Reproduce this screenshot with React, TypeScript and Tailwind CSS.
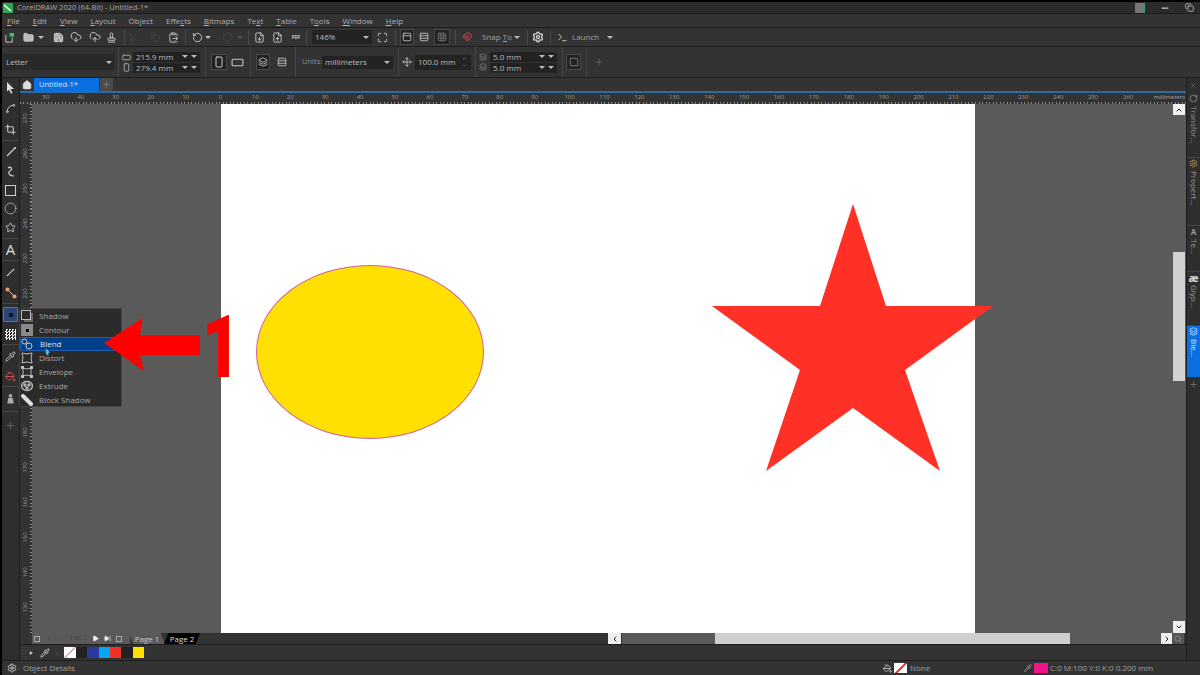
import React from 'react';
import {
  ChevronDown, ChevronUp, ChevronRight, ChevronLeft, CloudDownload, CloudUpload, Copy, FileDown, FileUp, Folder,
  Home, Maximize, Move, Plus, RotateCcw, RotateCw, Save, Scissors, Search, Settings, Square, Circle, Star, X,
  Minus, Stamp, ClipboardPaste, Pipette, PaintBucket, Spline, Crop, Slash, Grid3x3, Magnet, Play, SkipForward, RectangleHorizontal, RectangleVertical, Layers, Rows3, SquareDashed, PanelTop, Terminal
} from 'lucide-react';

const menus: [string, string, string][] = [
  ['', 'F', 'ile'], ['', 'E', 'dit'], ['', 'V', 'iew'], ['', 'L', 'ayout'], ['Ob', 'j', 'ect'], ['Effe', 'c', 'ts'],
  ['', 'B', 'itmaps'], ['Te', 'x', 't'], ['', 'T', 'able'], ['T', 'o', 'ols'], ['', 'W', 'indow'], ['', 'H', 'elp'],
];

const hLabels = ['50', '40', '30', '20', '10', '0', '10', '20', '30', '40', '50', '60', '70', '80', '90', '100', '110', '120', '130', '140', '150', '160', '170', '180', '190', '200', '210', '220', '230', '240', '250', '260'];
const vLabels = ['270', '260', '250', '240', '230', '220', '210', '200', '190', '180', '170', '160', '150', '140', '130'];

const flyout = ['Shadow', 'Contour', 'Blend', 'Distort', 'Envelope', 'Extrude', 'Block Shadow'];

const Sep = ({ className = '' }: { className?: string }) => <div className={`w-px h-[15px] bg-[#4a4a4a] mx-[3px] shrink-0 ${className}`} />;
const Caret = ({ dim = false, className = '' }: { dim?: boolean; className?: string }) => (
  <div className={`w-0 h-0 border-x-[3px] border-x-transparent border-t-[3px] shrink-0 ${dim ? 'border-t-[#555]' : 'border-t-[#bbb]'} ${className}`} />
);

const Tool = ({ children, className = 'w-[16px]', on = false }: { children: React.ReactNode; className?: string; on?: boolean }) => (
  <div className={`${className} h-[16px] flex items-center justify-center shrink-0 text-[#c8c8c8] ${on ? 'bg-[#222] border border-[#4a4a4a]' : ''}`}>{children}</div>
);

const Spin = ({ value }: { value: string }) => (
  <div className="w-[67px] h-[10px] bg-[#222] flex items-center justify-between pl-[3px] text-[8px] text-[#bdbdbd]">
    {value}
    <div className="flex gap-[3px] pr-[3px]"><Caret /><Caret /></div>
  </div>
);

const PropSep = () => <div className="w-px self-stretch bg-[#474747] shrink-0" />;

const toolbox = [
  { h: 'h-[20px]', sep: false, icon: <svg viewBox="0 0 12 12" className="w-[12px] h-[12px]"><path d="M2 0l7 7H5.5l2 4-1.5.8-2-4L2 9.5z" fill="#ddd" /></svg> },
  { h: 'h-[21px]', sep: false, icon: <Spline size={11} /> },
  { h: 'h-[22px]', sep: true, icon: <Crop size={11} strokeWidth={2.5} /> },
  { h: 'h-[22px]', sep: false, icon: <svg viewBox="0 0 12 12" className="w-[12px] h-[12px]"><path d="M2 10l8-8" stroke="#ccc" strokeWidth="1.2" /><circle cx="10" cy="2" r="1" fill="#ddd" /></svg> },
  { h: 'h-[18px]', sep: false, icon: <svg viewBox="0 0 12 12" className="w-[12px] h-[12px]" fill="none" stroke="#ccc" strokeWidth="1.2"><path d="M3 2c3-2 5 1 2 3-3 2 0 5 4 5" /></svg> },
  { h: 'h-[18px]', sep: false, icon: <div className="w-[11px] h-[11px] border border-[#ccc]" /> },
  { h: 'h-[18px]', sep: false, icon: <Circle size={13} strokeWidth={1.3} /> },
  { h: 'h-[22px]', sep: true, icon: <Star size={11} /> },
  { h: 'h-[22px]', sep: true, icon: <span className="text-[15px] leading-none text-[#ddd]">A</span> },
  { h: 'h-[22px]', sep: false, icon: <svg viewBox="0 0 12 12" className="w-[11px] h-[11px]"><path d="M2 10l8-8" stroke="#ccc" strokeWidth="1.2" /></svg> },
  { h: 'h-[21px]', sep: true, icon: <svg viewBox="0 0 12 12" className="w-[12px] h-[12px]"><path d="M2 2l8 8" stroke="#ccc" /><circle cx="2.5" cy="2.5" r="2" fill="#e8a070" /><circle cx="9.5" cy="9.5" r="2" fill="#e8a070" /></svg> },
  { h: 'h-[21px]', sep: false, icon: <div className="w-[15px] h-[15px] border border-[#3d78c8] bg-[#2b4677] rounded-[1px] flex items-center justify-center"><div className="w-[4px] h-[4px] bg-[#111]" /></div> },
  { h: 'h-[20px]', sep: true, icon: <div className="w-[11px] h-[11px] bg-[repeating-conic-gradient(#eee_0_25%,#222_0_50%)] bg-[length:3px_3px]" /> },
  { h: 'h-[22px]', sep: false, icon: <Pipette size={11} /> },
  { h: 'h-[20px]', sep: true, icon: <PaintBucket size={11} className="text-[#e05050]" /> },
  { h: 'h-[25px]', sep: true, icon: <svg viewBox="0 0 12 12" className="w-[11px] h-[12px]" fill="#aaa"><circle cx="6" cy="2.5" r="2" /><path d="M3.5 5h5l1 6h-7z" /></svg> },
  { h: 'h-[26px]', sep: false, icon: <Plus size={11} className="text-[#666]" /> },
];

const dockTabs = [
  { label: 'Transfor...', h: 'h-[65px]', icon: <RotateCw size={9} /> },
  { label: 'Propert...', h: 'h-[68px]', icon: <Settings size={9} className="text-[#d0a060]" /> },
  { label: 'Te...', h: 'h-[46px]', icon: <span className="text-[8px] font-bold">A</span> },
  { label: 'Glyp...', h: 'h-[54px]', icon: <span className="text-[11px] font-bold leading-none text-[#ddd]">æ</span> },
];

export default function App() {
  return (
    <div className="relative w-[1200px] h-[675px] overflow-hidden bg-black pl-[2px] pt-[2px] font-['Open_Sans','Liberation_Sans',sans-serif] text-[8px] text-[#bdbdbd] flex flex-col">
      {/* title bar */}
      <div className="h-[12px] bg-[#2b2b2b] flex items-center shrink-0 border-b border-[#1d1d1d]">
        <svg viewBox="0 0 10 10" className="w-[10px] h-[10px] ml-[1px]"><rect width="10" height="10" fill="#2fa84f" /><path d="M1 2l7 6" stroke="#fff" strokeWidth="1.6" /></svg>
        <span className="ml-[4px] text-[#a8a8a8] text-[7.5px]">CorelDRAW 2020 (64-Bit) - Untitled-1*</span>
        <div className="ml-auto flex items-center gap-[15px] pr-[6px] text-[#ccc]">
          <div className="w-[10px] h-[10px] bg-[#777] border-t border-r border-[#3ca060]" />
          <Minus size={10} strokeWidth={3} />
          <Copy size={9} />
        </div>
      </div>
      {/* menu */}
      <div className="h-[14px] bg-[#333] flex items-center gap-[13px] pl-[5px] shrink-0 border-b border-[#1d1d1d] text-[#b0b0b0] text-[8px]">
        {menus.map(([a, u, b]) => (
          <span key={a + u + b}>{a}<span className="underline">{u}</span>{b}</span>
        ))}
      </div>
      {/* standard toolbar */}
      <div className="h-[19px] bg-[#333] flex items-center shrink-0 border-b border-[#1d1d1d]">
        <Tool className="w-[14px]"><svg viewBox="0 0 12 12" className="w-[11px] h-[11px]" fill="none"><path d="M2 3v8h7V6" stroke="#ccc" /><rect x="6" y="1" width="5" height="4" fill="#3fbf5f" /></svg></Tool>
        <Tool className="w-[16px] ml-[4px]"><Folder size={11} fill="#bbb" /></Tool>
        <Caret className="ml-[2px]" />
        <Tool className="w-[16px] ml-[6px]"><Save size={11} fill="#999" className="text-[#ddd]" /></Tool>
        <Tool className="w-[16px] ml-[2px]"><CloudDownload size={12} /></Tool>
        <Tool className="w-[16px] ml-[3px]"><CloudUpload size={12} /></Tool>
        <Tool><Stamp size={11} /></Tool>
        <Sep className="ml-[5px]" />
        <Tool className="w-[10px]"><Scissors size={9} className="text-[#444]" /></Tool>
        <Tool className="w-[16px] ml-[9px]"><Copy size={10} className="text-[#444]" /></Tool>
        <Tool className="w-[16px] ml-[2px]"><ClipboardPaste size={11} /></Tool>
        <Sep className="ml-[4px]" />
        <Tool><RotateCcw size={11} /></Tool>
        <Caret />
        <Tool className="w-[16px] ml-[8px]"><RotateCw size={11} className="text-[#444]" /></Tool>
        <Caret dim className="ml-[2px]" />
        <Sep className="ml-[5px]" />
        <Tool className="w-[16px] -ml-[1px]"><FileDown size={11} /></Tool>
        <Tool className="w-[16px] ml-[2px]"><FileUp size={11} /></Tool>
        <Tool className="w-[16px] ml-[3px]"><span className="text-[4.5px] leading-none font-bold">PDF</span></Tool>
        <Sep className="ml-[2px]" />
        <div className="w-[60px] ml-[2px] h-[14px] bg-[#232323] flex items-center justify-between px-[3px] text-[8px] shrink-0">146%<Caret /></div>
        <Tool className="w-[16px] ml-[2px]"><Maximize size={11} /></Tool>
        <Sep className="ml-[5px]" />
        <Tool className="w-[14px] ml-[1px]" on><PanelTop size={10} /></Tool>
        <Tool className="w-[16px] ml-[2px]"><Rows3 size={10} /></Tool>
        <Tool className="w-[16px] ml-[2px]" on><Grid3x3 size={10} className="text-[#777]" /></Tool>
        <Sep className="ml-[5px]" />
        <Tool className="w-[14px] ml-[1px]"><Magnet size={10} className="text-[#e05050]" /></Tool>
        <span className="ml-[8px] w-[30px] text-[8px] text-[#a0a0a0] shrink-0">Snap <span className="underline">T</span>o</span>
        <Caret className="ml-[2px]" />
        <Sep className="ml-[7px]" />
        <Tool className="w-[14px]"><Settings size={12} strokeWidth={2.5} className="text-[#ddd]" /></Tool>
        <Sep className="ml-[5px]" />
        <Tool className="w-[14px] ml-[1px]"><Terminal size={11} /></Tool>
        <span className="ml-[3px] w-[30px] text-[8px] text-[#a0a0a0] shrink-0">Launch</span>
        <Caret className="ml-[5px]" />
      </div>
      {/* property bar */}
      <div className="h-[31px] bg-[#333] flex items-center shrink-0 border-b border-[#1d1d1d]">
        <div className="w-[112px] h-[16px] ml-[1px] bg-[#292929] flex items-center justify-between px-[3px] text-[8px] shrink-0">Letter<Caret /></div>
        <div className="w-[3px]" />
        <PropSep />
        <div className="w-[13px] ml-[1px] flex flex-col items-center gap-[1px] shrink-0"><RectangleHorizontal size={9} /><RectangleVertical size={9} /></div>
        <div className="flex flex-col gap-[1px] shrink-0"><Spin value="215.9 mm" /><Spin value="279.4 mm" /></div>
        <div className="w-[5px]" />
        <PropSep />
        <Tool className="w-[16px] ml-[5px]" on><RectangleVertical size={12} /></Tool>
        <Tool className="w-[20px]"><RectangleHorizontal size={13} /></Tool>
        <div className="w-[3px]" />
        <PropSep />
        <Tool className="w-[14px] ml-[5px]" on><Layers size={10} /></Tool>
        <Tool className="w-[24px]"><Rows3 size={10} /></Tool>
        <div className="w-[1px]" />
        <PropSep />
        <span className="ml-[6px] w-[20px] text-[#8c8c8c] text-[7.5px] shrink-0">Units:</span>
        <div className="w-[71px] h-[13px] bg-[#232323] flex items-center justify-between px-[3px] text-[8px] shrink-0">millimeters<Caret /></div>
        <div className="w-[5px]" />
        <PropSep />
        <Tool className="w-[15px]"><Move size={10} /></Tool>
        <div className="w-[56px] ml-[1px] h-[15px] bg-[#232323] flex items-center justify-between pl-[3px] pr-[4px] text-[8px] shrink-0">100.0 mm<div className="flex flex-col gap-[2px]"><ChevronUp size={5} /><ChevronDown size={5} /></div></div>
        <div className="w-[4px]" />
        <PropSep />
        <div className="w-[14px] flex flex-col items-center gap-[2px] text-[#888] shrink-0"><Layers size={8} /><Layers size={8} /></div>
        <div className="flex flex-col gap-[1px] shrink-0"><Spin value="5.0 mm" /><Spin value="5.0 mm" /></div>
        <div className="w-[5px]" />
        <PropSep />
        <Tool className="w-[15px] ml-[3px]" on><SquareDashed size={10} /></Tool>
        <div className="w-[5px]" />
        <PropSep />
        <Plus size={10} className="ml-[7px] text-[#666]" />
      </div>

      {/* work area */}
      <div className="flex-1 flex min-h-0">
        {/* toolbox */}
        <div className="w-[18px] shrink-0 bg-[#2e2e2e] flex flex-col text-[#c8c8c8] border-r border-[#1d1d1d]">
          {toolbox.map((t, i) => (
            <div key={i} className={`${t.h} flex items-center justify-center shrink-0 ${t.sep ? 'border-b border-[#454545]' : ''}`}>{t.icon}</div>
          ))}
        </div>
        <div className="flex-1 flex flex-col min-w-0">
          {/* doc tabs */}
          <div className="h-[15px] shrink-0 bg-[#333] border-b-2 border-[#2d6aa8] flex items-stretch">
            <div className="w-[14px] flex items-center justify-center"><Home size={10} fill="#ddd" className="text-[#ddd]" /></div>
            <div className="w-[65px] bg-[#0a6fe0] text-[#d8e8ff] flex items-center pl-[5px] text-[7.5px]">Untitled-1*</div>
            <div className="w-[13px] bg-[#4a4a4a] ml-[1px] flex items-center justify-center"><Plus size={9} strokeWidth={3} className="text-[#777]" /></div>
          </div>
          <div className="flex-1 flex min-h-0">
            <div className="flex-1 flex flex-col min-w-0">
              {/* horizontal ruler */}
              <div className="h-[11px] shrink-0 bg-[#333] flex flex-col justify-between relative">
                <div className="flex pl-[8.5px] text-[6px] leading-[8px] text-[#9a9a9a] whitespace-nowrap">
                  {hLabels.map((l, i) => <span key={i} className="w-[34.92px] text-center shrink-0">{l}</span>)}
                </div>
                <div className="h-[2px] bg-[repeating-linear-gradient(90deg,#8a8a8a_0_1px,transparent_1px_3.5px)]" />
                <span className="absolute right-[1px] top-0 text-[6px] leading-[8px] text-[#a8a8a8] bg-[#333] pl-[2px]">millimeters</span>
              </div>
              <div className="flex-1 flex min-h-0">
                {/* vertical ruler */}
                <div className="w-[12px] shrink-0 bg-[#333] flex overflow-hidden">
                  <div className="w-[10px] -mt-[3px] flex flex-col items-center text-[6px] text-[#9a9a9a]">
                    {vLabels.map((l, i) => <span key={i} className="h-[34.92px] shrink-0 flex items-center justify-center -rotate-90">{l}</span>)}
                  </div>
                  <div className="w-[2px] bg-[repeating-linear-gradient(0deg,#8a8a8a_0_1px,transparent_1px_3.5px)]" />
                </div>
                {/* canvas */}
                <div className="flex-1 flex bg-[#5a5a5a] min-w-0">
                  <div className="w-[189px] shrink-0" />
                  <div className="w-[754px] bg-white shrink-0" />
                </div>
                {/* vertical scrollbar */}
                <div className="w-[13px] shrink-0 bg-[#5a5a5a] flex flex-col pr-[1px] items-stretch">
                  <div className="h-[11px] bg-[#eee] flex items-center justify-center"><ChevronUp size={8} strokeWidth={3} className="text-[#222]" /></div>
                  <div className="h-[137px]" />
                  <div className="h-[129px] bg-[#d2d2d2]" />
                  <div className="flex-1" />
                  <div className="h-[12px] bg-[#eee] flex items-center justify-center"><ChevronDown size={8} strokeWidth={3} className="text-[#222]" /></div>
                </div>
              </div>
              {/* page tabs + horizontal scrollbar */}
              <div className="h-[11px] shrink-0 bg-[#333] flex">
                <div className="w-[12px] shrink-0" />
                <div className="w-[98px] bg-[#5a5a5a] shrink-0 flex items-center gap-[5px] pl-[2px] text-[#444]">
                  <div className="w-[6px] h-[6px] border border-[#aaa]" />
                  <ChevronLeft size={7} />
                  <ChevronLeft size={7} />
                  <span className="text-[7px]">1 of 2</span>
                  <Play size={7} fill="#eee" className="text-[#eee]" />
                  <SkipForward size={7} fill="#eee" className="text-[#eee]" />
                  <div className="w-[6px] h-[6px] border border-[#aaa]" />
                </div>
                <div className="w-[36px] -ml-[1px] bg-[#5a5a5a] text-[#ccc] flex items-center justify-center shrink-0 [clip-path:polygon(0_0,88%_0,100%_100%,12%_100%)]">Page 1</div>
                <div className="w-[36px] -ml-[1px] bg-black text-[#ddd] flex items-center justify-center shrink-0 [clip-path:polygon(12%_0,100%_0,88%_100%,0_100%)]">Page 2</div>
                <div className="w-[408px] shrink-0" />
                <div className="w-[13px] bg-[#eee] flex items-center justify-center shrink-0"><ChevronLeft size={8} strokeWidth={3} className="text-[#222]" /></div>
                <div className="w-px shrink-0" />
                <div className="w-[93px] bg-[#5a5a5a] shrink-0" />
                <div className="w-[355px] bg-[#cfcfcf] shrink-0" />
                <div className="w-[91px] bg-[#5a5a5a] shrink-0" />
                <div className="w-[11px] bg-[#eee] flex items-center justify-center shrink-0"><ChevronRight size={8} strokeWidth={3} className="text-[#222]" /></div>
                <div className="w-[12px] bg-[#555] flex items-center justify-center shrink-0"><Search size={8} className="text-[#999]" /></div>
              </div>
            </div>
          </div>
          {/* palette */}
          <div className="h-[16px] shrink-0 bg-[#333] border-t border-[#1d1d1d] flex items-center">
            <div className="w-[7px] h-[14px] ml-[1px] bg-[radial-gradient(#555_1px,transparent_1px)] bg-[length:3px_3px] shrink-0" />
            <Play size={4} fill="#ccc" className="text-[#ccc] ml-[1px] shrink-0" />
            <Pipette size={10} className="text-[#ddd] ml-[7px] shrink-0" />
            <span className="ml-[5px] w-[9px] text-[#555] shrink-0">&lt;</span>
            <div className="w-[12px] h-[11px] bg-white relative overflow-hidden shrink-0"><div className="absolute left-[-2px] top-[5px] w-[16px] h-px bg-[#c88] -rotate-45" /></div>
            <div className="w-[11px] h-[11px] bg-[#222]" />
            <div className="w-[12px] h-[11px] bg-[#2b3a9e]" />
            <div className="w-[11px] h-[11px] bg-[#00a8f3]" />
            <div className="w-[11px] h-[11px] bg-[#f03224]" />
            <div className="w-[12px] h-[11px] bg-[#222]" />
            <div className="w-[11px] h-[11px] bg-[#ffe000]" />
          </div>
        </div>
        {/* right docker */}
        <div className="w-[14px] shrink-0 bg-[#2e2e2e] flex flex-col items-stretch text-[#999] border-l border-[#1d1d1d] pb-[16px]">
          <div className="h-[14px] flex items-center justify-center"><X size={7} className="text-[#777]" /></div>
          <div className="h-[1px]" />
          {dockTabs.map(d => (
            <div key={d.label} className={`${d.h} flex flex-col items-center gap-[2px] border-b border-[#444] text-[8px]`}>
              <div className="h-[11px] flex items-center">{d.icon}</div>
              <span className="[writing-mode:vertical-rl] leading-none">{d.label}</span>
            </div>
          ))}
          <div className="h-[51px] bg-[#0a6fe0] flex flex-col items-center gap-[2px] text-[#d8e8ff] text-[8px]">
            <div className="h-[11px] flex items-center"><Layers size={9} /></div>
            <span className="[writing-mode:vertical-rl] leading-none">Ble...</span>
          </div>
          <div className="h-[15px] flex items-center justify-center"><Plus size={9} className="text-[#777]" /></div>
          <div className="flex-1" />
        </div>
      </div>
      {/* status bar */}
      <div className="h-[15px] shrink-0 bg-[#333] border-t border-[#1d1d1d] flex items-center text-[#a0a0a0] text-[8px]">
        <Settings size={10} className="ml-[5px] mr-[6px] text-[#ddd]" />
        <span>Object Details</span>
        <div className="flex-1" />
        <PaintBucket size={9} className="text-[#ddd] mr-[2px]" />
        <div className="w-[13px] h-[10px] bg-white relative overflow-hidden mr-[3px]"><div className="absolute left-[-2px] top-[4px] w-[18px] h-[1.5px] bg-[#d33] -rotate-45" /></div>
        <span className="w-[114px]">None</span>
        <Pipette size={8} className="mr-[2px]" />
        <div className="w-[14px] h-[10px] bg-[#f0148c] mr-[2px]" />
        <span className="w-[95px] whitespace-nowrap">C:0 M:100 Y:0 K:0  0.200 mm</span>
        <div className="w-[55px]" />
      </div>

      {/* shapes on the page */}
      <div className="absolute left-[256px] top-[265px] w-[228px] h-[174px] rounded-[50%] bg-[#ffe000] border border-[#d060a0]" />

      {/* effects flyout */}
      <div className="absolute left-[19px] top-[308px] w-[103px] h-[99px] bg-[#2b2b2b] border border-[#444] rounded-[1px] flex flex-col text-[8px] text-[#a8a8a8]">
        {flyout.map((f, i) => (
          <div key={f} className={`h-[14px] shrink-0 flex items-center pl-[19px] ${i === 2 ? 'bg-[#023f8a] text-[#dbe6f5] w-[96px] border border-[#1d5fae] rounded-[2px]' : ''}`}>{f}</div>
        ))}
      </div>
      <div className="absolute left-[21px] top-[309px] flex flex-col text-[#b8b8b8]">
        <div className="h-[14px] flex items-center"><svg viewBox="0 0 12 12" className="w-[12px] h-[12px]"><rect x="3" y="3" width="9" height="9" fill="#666" /><rect x="0.5" y="0.5" width="9" height="9" fill="#2b2b2b" stroke="#bbb" /></svg></div>
        <div className="h-[14px] flex items-center"><div className="w-[12px] h-[12px] bg-[#8a8a8a] flex items-center justify-center"><div className="w-[3px] h-[3px] bg-black" /></div></div>
        <div className="h-[14px] flex items-center"><svg viewBox="0 0 12 12" className="w-[12px] h-[12px]" fill="none" stroke="#ccc"><circle cx="3.5" cy="3.5" r="2.5" /><rect x="5" y="5" width="6" height="6" rx="3" /></svg></div>
        <div className="h-[14px] flex items-center"><svg viewBox="0 0 12 12" className="w-[12px] h-[12px]" fill="none" stroke="#bbb"><path d="M1 1q5 2 10 0q-2 5 0 10q-5-2-10 0q2-5 0-10z" /></svg></div>
        <div className="h-[14px] flex items-center"><svg viewBox="0 0 12 12" className="w-[12px] h-[12px]" fill="none" stroke="#bbb"><path d="M2 2q4 2 8 0v8q-4-2-8 0z" /><rect x="0.5" y="0.5" width="2" height="2" fill="#ccc" /><rect x="9.5" y="0.5" width="2" height="2" fill="#ccc" /><rect x="0.5" y="9.5" width="2" height="2" fill="#ccc" /><rect x="9.5" y="9.5" width="2" height="2" fill="#ccc" /></svg></div>
        <div className="h-[14px] flex items-center"><svg viewBox="0 0 12 12" className="w-[12px] h-[12px]" fill="none" stroke="#bbb" strokeWidth="1.4"><ellipse cx="6" cy="6" rx="5.4" ry="4.5" /><circle cx="4" cy="5" r="1" /><circle cx="8" cy="5" r="1" /><circle cx="6" cy="8" r="1" /></svg></div>
        <div className="h-[14px] flex items-center"><svg viewBox="0 0 12 12" className="w-[12px] h-[12px]"><path d="M2 2l8 8" stroke="#ddd" strokeWidth="4" strokeLinecap="round" /></svg></div>
      </div>
      <svg viewBox="0 0 8 10" className="absolute left-[45px] top-[348px] w-[6px] h-[8px]"><path d="M1 0l6 6H4l1 3-2 .5-1-3-1 2z" fill="#4fc3f7" /></svg>

      {/* star and annotation arrow */}
      <svg viewBox="0 0 1200 675" className="absolute inset-0 w-[1200px] h-[675px] pointer-events-none">
        <polygon points="853,204 886,306 993,306 905,370 940,471 853,408 766,471 800,370 712,306 820,306" fill="#ff3126" />
        <polygon points="104,343 143,318 140,335 200,335 200,355 140,355 144,371" fill="#ff0000" />
      </svg>
      <span className="absolute left-[193px] top-[297px] w-[36px] text-right font-['Roboto',sans-serif] font-black text-[88px] leading-[100px] text-[#ff0000] origin-right scale-x-[0.75]">1</span>
    </div>
  );
}
